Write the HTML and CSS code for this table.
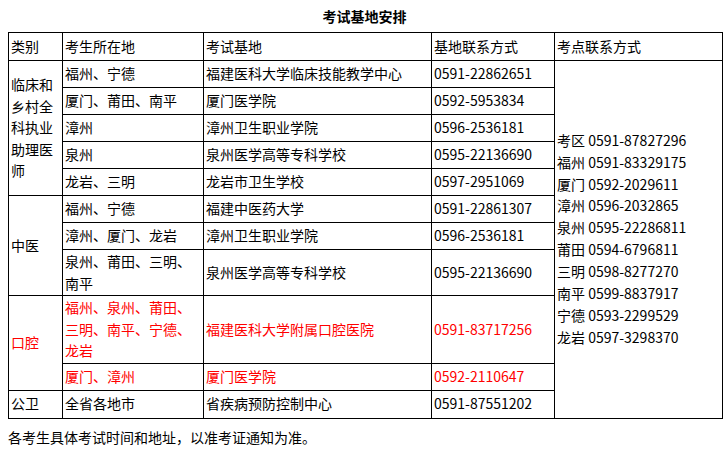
FILE: index.html
```html
<!DOCTYPE html>
<html lang="zh-CN">
<head>
<meta charset="utf-8">
<title>考试基地安排</title>
<link rel="stylesheet" href="styles.css">
</head>
<body>
<div class="page">
  <h1 class="title">考试基地安排</h1>
  <table class="grid">
    <colgroup>
      <col class="c1"><col class="c2"><col class="c3"><col class="c4"><col class="c5">
    </colgroup>
    <tr class="head">
      <td>类别</td><td>考生所在地</td><td>考试基地</td><td>基地联系方式</td><td>考点联系方式</td>
    </tr>
    <tr class="one">
      <td rowspan="5">临床和乡村全科执业助理医师</td>
      <td>福州、宁德</td><td>福建医科大学临床技能教学中心</td><td>0591-22862651</td>
      <td rowspan="11" class="contacts">
        考区 0591-87827296<br>
        福州 0591-83329175<br>
        厦门 0592-2029611<br>
        漳州 0596-2032865<br>
        泉州 0595-22286811<br>
        莆田 0594-6796811<br>
        三明 0598-8277270<br>
        南平 0599-8837917<br>
        宁德 0593-2299529<br>
        龙岩 0597-3298370
      </td>
    </tr>
    <tr class="one"><td>厦门、莆田、南平</td><td>厦门医学院</td><td>0592-5953834</td></tr>
    <tr class="one"><td>漳州</td><td>漳州卫生职业学院</td><td>0596-2536181</td></tr>
    <tr class="one"><td>泉州</td><td>泉州医学高等专科学校</td><td>0595-22136690</td></tr>
    <tr class="one"><td>龙岩、三明</td><td>龙岩市卫生学校</td><td>0597-2951069</td></tr>
    <tr class="one">
      <td rowspan="3">中医</td>
      <td>福州、宁德</td><td>福建中医药大学</td><td>0591-22861307</td>
    </tr>
    <tr class="one"><td>漳州、厦门、龙岩</td><td>漳州卫生职业学院</td><td>0596-2536181</td></tr>
    <tr><td>泉州、莆田、三明、南平</td><td>泉州医学高等专科学校</td><td>0595-22136690</td></tr>
    <tr class="red">
      <td rowspan="2">口腔</td>
      <td>福州、泉州、莆田、三明、南平、宁德、龙岩</td><td>福建医科大学附属口腔医院</td><td>0591-83717256</td>
    </tr>
    <tr class="red one"><td>厦门、漳州</td><td>厦门医学院</td><td>0592-2110647</td></tr>
    <tr class="last"><td>公卫</td><td>全省各地市</td><td>省疾病预防控制中心</td><td>0591-87551202</td></tr>
  </table>
  <p class="note">各考生具体考试时间和地址，以准考证通知为准。</p>
</div>
</body>
</html>
```

FILE: styles.css
```css
html, body {
  margin: 0;
  padding: 0;
  background: #fff;
}

body {
  font-family: "Noto Sans CJK SC", "Noto Sans", sans-serif;
  font-size: 14px;
  color: #000;
}

.page {
  padding: 0 7px 0 8px;
}

.title {
  margin: 0;
  height: 32px;
  line-height: 32px;
  font-size: 14px;
  font-weight: bold;
  text-align: center;
}

.grid {
  border-collapse: collapse;
  table-layout: fixed;
  width: 714px;
}

.c1 { width: 54px; }
.c2 { width: 141px; }
.c3 { width: 228px; }
.c4 { width: 123px; }
.c5 { width: 168px; }

.grid td {
  border: 1px solid #000;
  padding: 1px 1px 1px 2px;
  line-height: 21.5px;
  vertical-align: middle;
  text-align: left;
}

.grid tr.head { height: 28px; }
.grid tr.one { height: 27px; }
.grid tr.last { height: 28px; }

.grid tr.red td { color: #f00; }

.grid td.contacts { color: #000; line-height: 21.9px; }

.note {
  margin: 7px 0 0;
  line-height: 22px;
}
```
